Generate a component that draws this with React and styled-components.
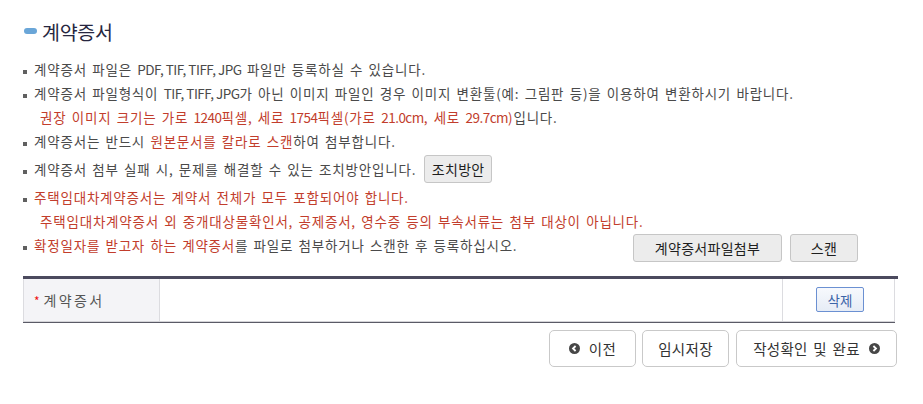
import React from "react";
import styled, { createGlobalStyle } from "styled-components";

const Global = createGlobalStyle`
  html, body { margin: 0; padding: 0; background: #fff; }
  body { font-family: "Noto Sans CJK KR", "Noto Sans", sans-serif; color: #4a4a4a; }
  * { box-sizing: border-box; }
`;

const Page = styled.div`
  width: 875px;
  margin-left: 23px;
  padding-top: 18px;
`;

const Title = styled.h2`
  display: flex;
  align-items: center;
  gap: 5px;
  margin: 0;
  height: 26px;
  font-size: 19.5px;
  font-weight: 400;
  color: #262640;
  letter-spacing: -0.3px;
`;

const Pill = styled.span`
  width: 13px;
  height: 6px;
  border-radius: 3px;
  background: #6aa6d8;
  margin-left: 1px;
`;

const List = styled.ul`
  list-style: none;
  margin: 13px 0 0;
  padding: 0;
  width: 835px;
`;

const Item = styled.li`
  position: relative;
  padding-left: 11px;
  font-size: 13.5px;
  line-height: ${(p) => p.$h || 24}px;
  color: #4a4a4a;
  display: flex;
  align-items: ${(p) => (p.$top ? "flex-start" : "center")};
  min-height: ${(p) => p.$h || 24}px;
  letter-spacing: 0.8px;
  word-spacing: 1.5px;
  white-space: nowrap;
  &::before {
    content: "";
    position: absolute;
    left: 0;
    top: ${(p) => (p.$h || 24) / 2 + 1}px;
    width: 4px;
    height: 4px;
    background: #606060;
  }
`;

const Latin = styled.span`
  letter-spacing: -0.5px;
  word-spacing: 0;
`;

const Block = styled.div`
  display: flex;
  flex-direction: column;
`;

const Sub = styled.div`
  padding-left: 6px;
  line-height: 24px;
`;

const Red = styled.span`
  color: #c23d2c;
`;

const GrayBtn = styled.button`
  font-family: inherit;
  font-size: 14px;
  color: #1e1e1e;
  height: 28px;
  width: ${(p) => p.$w}px;
  margin-left: ${(p) => p.$ml || 0}px;
  background: #ececec;
  border: 1px solid #c6c6c6;
  border-radius: 3px;
  padding: 0;
  letter-spacing: 0.3px;
  word-spacing: 0;
  cursor: pointer;
`;

const Spacer = styled.div`
  flex: 1;
`;

const BtnGroup = styled.div`
  display: flex;
  gap: 8px;
  margin-top: 1px;
`;

const Table = styled.div`
  margin-top: 14px;
  border-top: 3px solid #4b4a5e;
`;

const Row = styled.div`
  display: grid;
  grid-template-columns: 137px 1fr 112px;
  height: 43px;
  margin-right: 3px;
  border-bottom: 1px solid #d4d4d8;
  box-shadow: 0 1px 0 #5a5a66;
`;

const LabelCell = styled.div`
  background: #f4f4f7;
  border-left: 1px solid #dcdce0;
  border-right: 1px solid #dcdce0;
  display: flex;
  align-items: center;
  padding-left: 10px;
  font-size: 14px;
  color: #555;
  letter-spacing: 2.3px;
`;

const Star = styled.span`
  color: #ee1111;
  margin-right: 4px;
  font-size: 12px;
  letter-spacing: 0;
`;

const Cell = styled.div`
  border-right: 1px solid #dcdce0;
  display: flex;
  align-items: center;
  justify-content: center;
`;

const BlueBtn = styled.button`
  font-family: inherit;
  font-size: 13.5px;
  color: #3c64a8;
  width: 48px;
  height: 25px;
  margin-left: 3px;
  margin-top: -1px;
  padding: 0;
  border: 1px solid #6b90d2;
  border-radius: 2px;
  background: linear-gradient(#f7f9fd, #e6ecf6);
  cursor: pointer;
`;

const Actions = styled.div`
  display: flex;
  justify-content: flex-end;
  gap: 6px;
  margin-top: 8px;
  margin-right: 1px;
`;

const NavBtn = styled.button`
  font-family: inherit;
  font-size: 14.5px;
  color: #333;
  height: 37px;
  width: ${(p) => p.$w}px;
  margin-left: ${(p) => p.$ml || 0}px;
  background: #fff;
  border: 1px solid #c9c9c9;
  border-radius: 5px;
  display: flex;
  align-items: center;
  justify-content: center;
  gap: 9px;
  padding: 0;
  letter-spacing: 0.3px;
  word-spacing: 2px;
  cursor: pointer;
`;

const Arrow = ({ dir }) => (
  <svg width="11" height="11" viewBox="0 0 11 11">
    <circle cx="5.5" cy="5.5" r="5.5" fill="#474747" />
    <path
      d={dir === "left" ? "M6.6 3 L4 5.5 L6.6 8" : "M4.4 3 L7 5.5 L4.4 8"}
      stroke="#fff"
      strokeWidth="1.8"
      fill="none"
    />
  </svg>
);

export default function App() {
  return (
    <>
      <Global />
      <Page>
        <Title>
          <Pill />
          계약증서
        </Title>
        <List>
          <Item>
            <span>
              계약증서 파일은 <Latin>PDF, TIF, TIFF, JPG</Latin> 파일만 등록하실 수 있습니다.
            </span>
          </Item>
          <Item>
            <Block>
              <span>
                계약증서 파일형식이 <Latin>TIF, TIFF, JPG</Latin>가 아닌 이미지 파일인 경우 이미지 변환툴(예: 그림판 등)을 이용하여 변환하시기 바랍니다.
              </span>
              <Sub>
                <Red>
                  권장 이미지 크기는 가로 <Latin>1240</Latin>픽셀, 세로 <Latin>1754</Latin>픽셀(가로 <Latin>21.0cm</Latin>, 세로 <Latin>29.7cm</Latin>)
                </Red>
                입니다.
              </Sub>
            </Block>
          </Item>
          <Item>
            <span>
              계약증서는 반드시 <Red>원본문서를 칼라로 스캔</Red>하여 첨부합니다.
            </span>
          </Item>
          <Item $h={32}>
            계약증서 첨부 실패 시, 문제를 해결할 수 있는 조치방안입니다.
            <GrayBtn $w={68} $ml={8}>조치방안</GrayBtn>
          </Item>
          <Item>
            <Block>
              <Red>주택임대차계약증서는 계약서 전체가 모두 포함되어야 합니다.</Red>
              <Sub>
                <Red>주택임대차계약증서 외 중개대상물확인서, 공제증서, 영수증 등의 부속서류는 첨부 대상이 아닙니다.</Red>
              </Sub>
            </Block>
          </Item>
          <Item $top>
            <span>
              <Red>확정일자를 받고자 하는 계약증서</Red>를 파일로 첨부하거나 스캔한 후 등록하십시오.
            </span>
            <Spacer />
            <BtnGroup>
              <GrayBtn $w={149}>계약증서파일첨부</GrayBtn>
              <GrayBtn $w={68}>스캔</GrayBtn>
            </BtnGroup>
          </Item>
        </List>
        <Table>
          <Row>
            <LabelCell>
              <Star>*</Star>계약증서
            </LabelCell>
            <Cell />
            <Cell>
              <BlueBtn>삭제</BlueBtn>
            </Cell>
          </Row>
        </Table>
        <Actions>
          <NavBtn $w={87}>
            <Arrow dir="left" />
            이전
          </NavBtn>
          <NavBtn $w={87}>임시저장</NavBtn>
          <NavBtn $w={161} $ml={1}>
            작성확인 및 완료
            <Arrow dir="right" />
          </NavBtn>
        </Actions>
      </Page>
    </>
  );
}
